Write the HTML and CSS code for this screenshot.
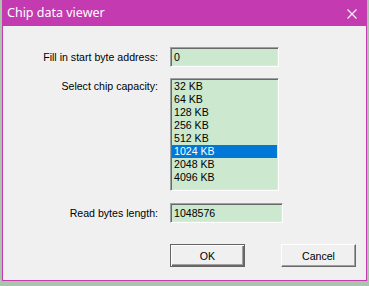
FILE: index.html
```html
<!DOCTYPE html>
<html lang="en">
<head>
  <meta charset="UTF-8">
  <title>Chip data viewer</title>
  <link rel="stylesheet" href="styles.css">
</head>
<body>
  <div class="window">
    <div class="titlebar">
      <span class="title">Chip data viewer</span>
      <svg class="close" width="10" height="10" viewBox="0 0 10 10">
        <path d="M0.5 0.5 L9.5 9.5 M9.5 0.5 L0.5 9.5" stroke="#fff" stroke-width="1.1" fill="none"/>
      </svg>
    </div>
    <div class="content">
      <div class="form">
        <label class="label">Fill in start byte address:</label>
        <div class="field">0</div>

        <label class="label label-top">Select chip capacity:</label>
        <ul class="listbox">
          <li>32 KB</li>
          <li>64 KB</li>
          <li>128 KB</li>
          <li>256 KB</li>
          <li>512 KB</li>
          <li class="selected">1024 KB</li>
          <li>2048 KB</li>
          <li>4096 KB</li>
        </ul>

        <label class="label">Read bytes length:</label>
        <div class="field field-wide">1048576</div>
      </div>

      <div class="buttons">
        <button class="btn btn-default">OK</button>
        <button class="btn">Cancel</button>
      </div>
    </div>
  </div>
</body>
</html>
```

FILE: styles.css
```css
body {
  margin: 0;
  background-color: #aac6aa;
  font-family: "Liberation Sans", Arial, sans-serif;
  font-size: 10.6px;
  color: #000;
}

.window {
  margin-left: 2px;
  width: 365px;
  height: 281px;
  box-sizing: border-box;
  border: 1px solid #c43ab0;
  border-top: none;
  background-color: #f0f0f0;
}

.titlebar {
  height: 26px;
  background-color: #c43ab0;
  display: flex;
  align-items: center;
  padding-left: 4px;
  padding-right: 9px;
}

.title {
  flex: 1;
  color: #fff;
  font-family: "Noto Sans", sans-serif;
  font-size: 12.5px;
  margin-top: -1px;
}

.close {
  margin-top: 1px;
}

.content {
  padding-top: 21px;
}

.form {
  display: grid;
  grid-template-columns: 155px auto;
  column-gap: 12px;
  row-gap: 11px;
  align-items: center;
}

.label {
  text-align: right;
  line-height: 13px;
}

.label-top {
  align-self: start;
  margin-top: 2px;
}

.field {
  width: 109px;
  height: 20px;
  box-sizing: border-box;
  background-color: #cce8cf;
  border-top: 1px solid #a0a0a0;
  border-left: 1px solid #a0a0a0;
  border-bottom: 1px solid #fff;
  border-right: 1px solid #fff;
  box-shadow: inset 1px 1px 0 #696969, inset -1px -1px 0 #e3e3e3;
  padding-left: 3px;
  line-height: 18px;
}

.field-wide {
  width: 113px;
}

.listbox {
  list-style: none;
  margin: 0 0 1px 0;
  width: 109px;
  height: 113px;
  box-sizing: border-box;
  padding: 1px 1px 0 1px;
  background-color: #cce8cf;
  border-top: 1px solid #a0a0a0;
  border-left: 1px solid #a0a0a0;
  border-bottom: 1px solid #fff;
  border-right: 1px solid #fff;
  box-shadow: inset 1px 1px 0 #696969, inset -1px -1px 0 #e3e3e3;
}

.listbox li {
  height: 13px;
  line-height: 13px;
  padding-left: 2px;
}

.listbox li.selected {
  background-color: #0078d7;
  color: #fff;
}

.buttons {
  display: flex;
  gap: 36px;
  padding-left: 167px;
  margin-top: 21px;
}

.btn {
  width: 75px;
  height: 23px;
  box-sizing: border-box;
  font-family: "Liberation Sans", Arial, sans-serif;
  font-size: 10.6px;
  color: #000;
  background-color: #f0f0f0;
  border-top: 1px solid #fff;
  border-left: 1px solid #fff;
  border-bottom: 1px solid #696969;
  border-right: 1px solid #696969;
  box-shadow: inset -1px -1px 0 #a0a0a0;
  padding: 0;
}

.btn-default {
  border: 1px solid #646464;
  box-shadow: inset 1px 1px 0 #fff, inset -1px -1px 0 #696969, inset -2px -2px 0 #a0a0a0;
}
```
